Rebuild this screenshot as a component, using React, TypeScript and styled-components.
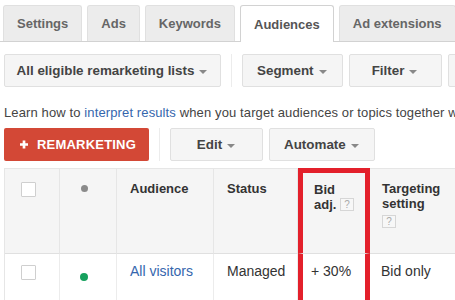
import styled, { createGlobalStyle } from "styled-components";

const GlobalStyle = createGlobalStyle`
    html, body {
        margin: 0;
        padding: 0;
        background: #fff;
        overflow: hidden;
    }
    body {
        font-family: "Liberation Sans", Arial, sans-serif;
        color: #333;
    }
`;

const Page = styled.div`
    width: 455px;
    height: 300px;
    overflow: hidden;
    padding-left: 4px;
    box-sizing: border-box;
`;

const TabBar = styled.nav`
    display: flex;
    gap: 5px;
    padding: 5px 0 0 3px;
    margin-left: -4px;
    border-bottom: 1px solid #d2d2d2;
    white-space: nowrap;
`;

const Tab = styled.div<{ $active?: boolean }>`
    display: flex;
    align-items: center;
    padding: 0 13px;
    box-sizing: border-box;
    font-size: 13px;
    font-weight: bold;
    color: ${(p) => (p.$active ? "#555" : "#666")};
    background: ${(p) => (p.$active ? "#fff" : "#ececec")};
    border: 1px solid ${(p) => (p.$active ? "#d2d2d2" : "#e0e0e0")};
    border-bottom: none;
    border-radius: 3px 3px 0 0;
    margin-bottom: ${(p) => (p.$active ? "-1px" : "0")};
    height: ${(p) => (p.$active ? "37px" : "36px")};
    flex-shrink: 0;
`;

const Toolbar = styled.div<{ $top: number }>`
    display: flex;
    align-items: stretch;
    gap: 6px;
    height: 33px;
    margin-top: ${(p) => p.$top}px;
    white-space: nowrap;
`;

const Button = styled.div`
    display: flex;
    align-items: center;
    justify-content: center;
    gap: 5px;
    min-width: 93px;
    padding: 0 15px 0 14px;
    box-sizing: border-box;
    background: #f5f5f5;
    border: 1px solid #e0e0e0;
    border-radius: 2px;
    font-size: 13.4px;
    font-weight: bold;
    color: #444;
    flex-shrink: 0;
`;

const Caret = styled.span`
    width: 0;
    height: 0;
    margin-top: 2px;
    border-left: 4px solid transparent;
    border-right: 4px solid transparent;
    border-top: 4px solid #888;
`;

const Divider = styled.div`
    width: 1px;
    background: #ececec;
    margin: 0 4px;
    flex-shrink: 0;
`;

const RedButton = styled.div`
    display: flex;
    align-items: center;
    gap: 9px;
    padding: 0 13px 0 16px;
    width: 145px;
    box-sizing: border-box;
    background: #d34836;
    border-radius: 2px;
    color: #fff;
    font-size: 13px;
    font-weight: bold;
    letter-spacing: 0.2px;
    flex-shrink: 0;
`;

const Hint = styled.p`
    margin: 18px 0 0;
    font-size: 13px;
    letter-spacing: 0.12px;
    line-height: 16px;
    color: #444;
    white-space: nowrap;
`;

const Link = styled.a`
    color: #3566ad;
    text-decoration: none;
`;

const Table = styled.div`
    display: grid;
    grid-template-columns: 55px 57px 97px 84px 72px 160px;
    grid-template-rows: 86px 60px;
    margin-top: 7px;
    border-left: 1px solid #e6e6e6;
    width: 526px;
`;

const HeadCell = styled.div<{ $pad?: number; $bid?: boolean }>`
    background: #f5f5f5;
    border-top: ${(p) => (p.$bid ? "5px solid #e3202b" : "1px solid #e6e6e6")};
    border-bottom: 1px solid #e0e0e0;
    border-right: ${(p) => (p.$bid ? "5px solid #e3202b" : "1px solid #e6e6e6")};
    border-left: ${(p) => (p.$bid ? "5px solid #e3202b" : "none")};
    padding: ${(p) => (p.$bid ? 9 : 12)}px 4px 0 ${(p) => p.$pad ?? 12}px;
    box-sizing: border-box;
    font-size: 13px;
    font-weight: bold;
    line-height: 15px;
    color: #333;
`;

const Cell = styled.div<{ $pad?: number; $bid?: boolean }>`
    background: #fff;
    border-right: ${(p) => (p.$bid ? "5px solid #e3202b" : "1px solid #ececec")};
    border-left: ${(p) => (p.$bid ? "5px solid #e3202b" : "none")};
    padding: 9px 4px 0 ${(p) => p.$pad ?? 12}px;
    box-sizing: border-box;
    font-size: 14px;
    line-height: 17px;
    color: #333;
    white-space: nowrap;
`;

const Checkbox = styled.div<{ $top: number }>`
    width: 15px;
    height: 15px;
    box-sizing: border-box;
    margin-top: ${(p) => p.$top}px;
    border: 1px solid #cfcfcf;
    border-radius: 1px;
    background: #fff;
`;

const Dot = styled.div<{ $color: string; $size: number; $top: number }>`
    width: ${(p) => p.$size}px;
    height: ${(p) => p.$size}px;
    margin-top: ${(p) => p.$top}px;
    border-radius: 50%;
    background: ${(p) => p.$color};
`;

const Help = styled.span<{ $top?: number }>`
    display: inline-flex;
    align-items: center;
    justify-content: center;
    width: 14px;
    height: 13px;
    box-sizing: border-box;
    border: 1px solid #d6d6d6;
    background: #f7f7f7;
    color: #aaa;
    font-size: 10px;
    font-weight: normal;
    vertical-align: top;
    margin-top: ${(p) => p.$top ?? 1}px;
`;

const Plus = () => (
    <svg width="9" height="9" viewBox="0 0 9 9">
        <path d="M3 0h3v3h3v3H6v3H3V6H0V3h3z" fill="#fff" />
    </svg>
);

const tabs = ["Settings", "Ads", "Keywords", "Audiences", "Ad extensions"];

const App = () => {
    return (
        <Page>
            <GlobalStyle />
            <TabBar>
                {tabs.map((t) => (
                    <Tab key={t} $active={t === "Audiences"}>{t}</Tab>
                ))}
            </TabBar>

            <Toolbar $top={12}>
                <Button style={{ width: 217 }}>All eligible remarketing lists <Caret /></Button>
                <Divider />
                <Button>Segment <Caret /></Button>
                <Button>Filter <Caret /></Button>
                <Button>Columns <Caret /></Button>
            </Toolbar>

            <Hint>
                Learn how to <Link>interpret results</Link> when you target audiences or topics together with keywords
            </Hint>

            <Toolbar $top={7}>
                <RedButton><Plus />REMARKETING</RedButton>
                <Divider />
                <Button>Edit <Caret /></Button>
                <Button>Automate <Caret /></Button>
            </Toolbar>

            <Table>
                <HeadCell $pad={16}><Checkbox $top={1} /></HeadCell>
                <HeadCell $pad={21}><Dot $color="#8a8a8a" $size={7} $top={4} /></HeadCell>
                <HeadCell $pad={13}>Audience</HeadCell>
                <HeadCell $pad={13}>Status</HeadCell>
                <HeadCell $bid $pad={11}>Bid<br />adj. <Help>?</Help></HeadCell>
                <HeadCell $pad={12}>Targeting<br />setting<br /><Help $top={4}>?</Help></HeadCell>

                <Cell $pad={16}><Checkbox $top={2} /></Cell>
                <Cell $pad={20}><Dot $color="#16a05d" $size={8} $top={10} /></Cell>
                <Cell $pad={13}><Link>All visitors</Link></Cell>
                <Cell $pad={13}>Managed</Cell>
                <Cell $bid $pad={8}>+ 30%</Cell>
                <Cell $pad={11}>Bid only</Cell>
            </Table>
        </Page>
    );
};

export default App;
